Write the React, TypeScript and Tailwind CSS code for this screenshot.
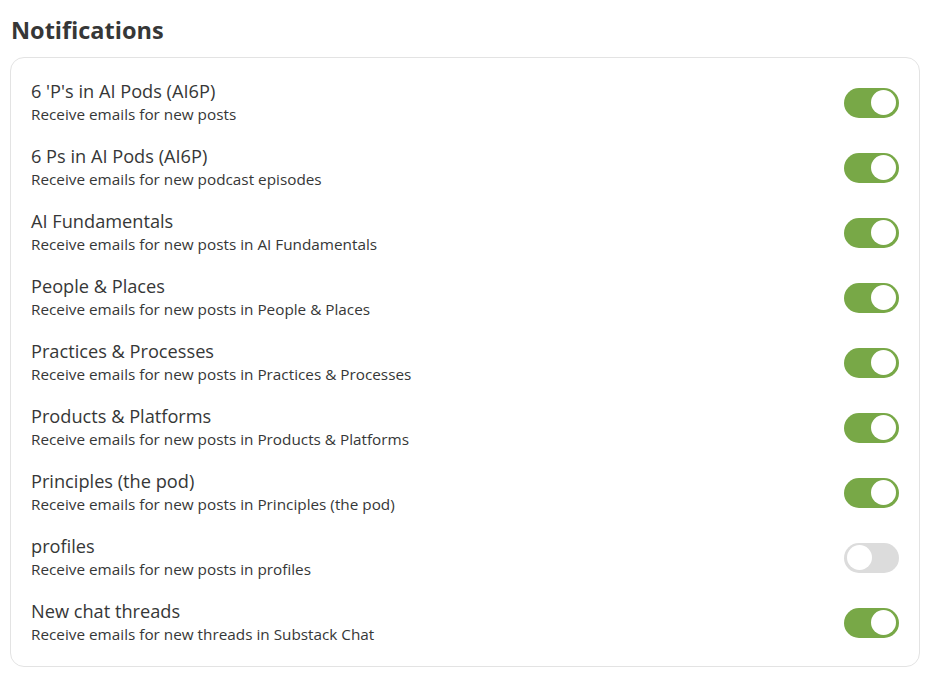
const items = [
  { title: "6 'P's in AI Pods (AI6P)", desc: "Receive emails for new posts", on: true },
  { title: "6 Ps in AI Pods (AI6P)", desc: "Receive emails for new podcast episodes", on: true },
  { title: "AI Fundamentals", desc: "Receive emails for new posts in AI Fundamentals", on: true },
  { title: "People & Places", desc: "Receive emails for new posts in People & Places", on: true },
  { title: "Practices & Processes", desc: "Receive emails for new posts in Practices & Processes", on: true },
  { title: "Products & Platforms", desc: "Receive emails for new posts in Products & Platforms", on: true },
  { title: "Principles (the pod)", desc: "Receive emails for new posts in Principles (the pod)", on: true },
  { title: "profiles", desc: "Receive emails for new posts in profiles", on: false },
  { title: "New chat threads", desc: "Receive emails for new threads in Substack Chat", on: true },
];

function Toggle({ on }: { on: boolean }) {
  return (
    <div
      className={`flex h-[30px] w-[55px] shrink-0 items-center rounded-full px-[3px] ${
        on ? "justify-end bg-[#78a847]" : "justify-start bg-[#dcdcdc]"
      }`}
    >
      <div className="h-[25px] w-[25px] rounded-full bg-white" />
    </div>
  );
}

export default function App() {
  return (
    <div className="bg-white px-[10px] pt-[14px] text-[#363737] font-['Open_Sans',sans-serif]">
      <h1 className="mb-[10px] pl-[1px] text-[23.5px] font-bold leading-[33px]">Notifications</h1>
      <div className="flex w-[910px] flex-col gap-[18px] rounded-[14px] border border-[#e3e3e3] px-[20px] pt-[21px] pb-[20px]">
        {items.map((it) => (
          <div key={it.title} className="flex items-center justify-between">
            <div>
              <div className="text-[18.2px] leading-[24px]">{it.title}</div>
              <div className="text-[15.3px] leading-[23px]">{it.desc}</div>
            </div>
            <Toggle on={it.on} />
          </div>
        ))}
      </div>
    </div>
  );
}
